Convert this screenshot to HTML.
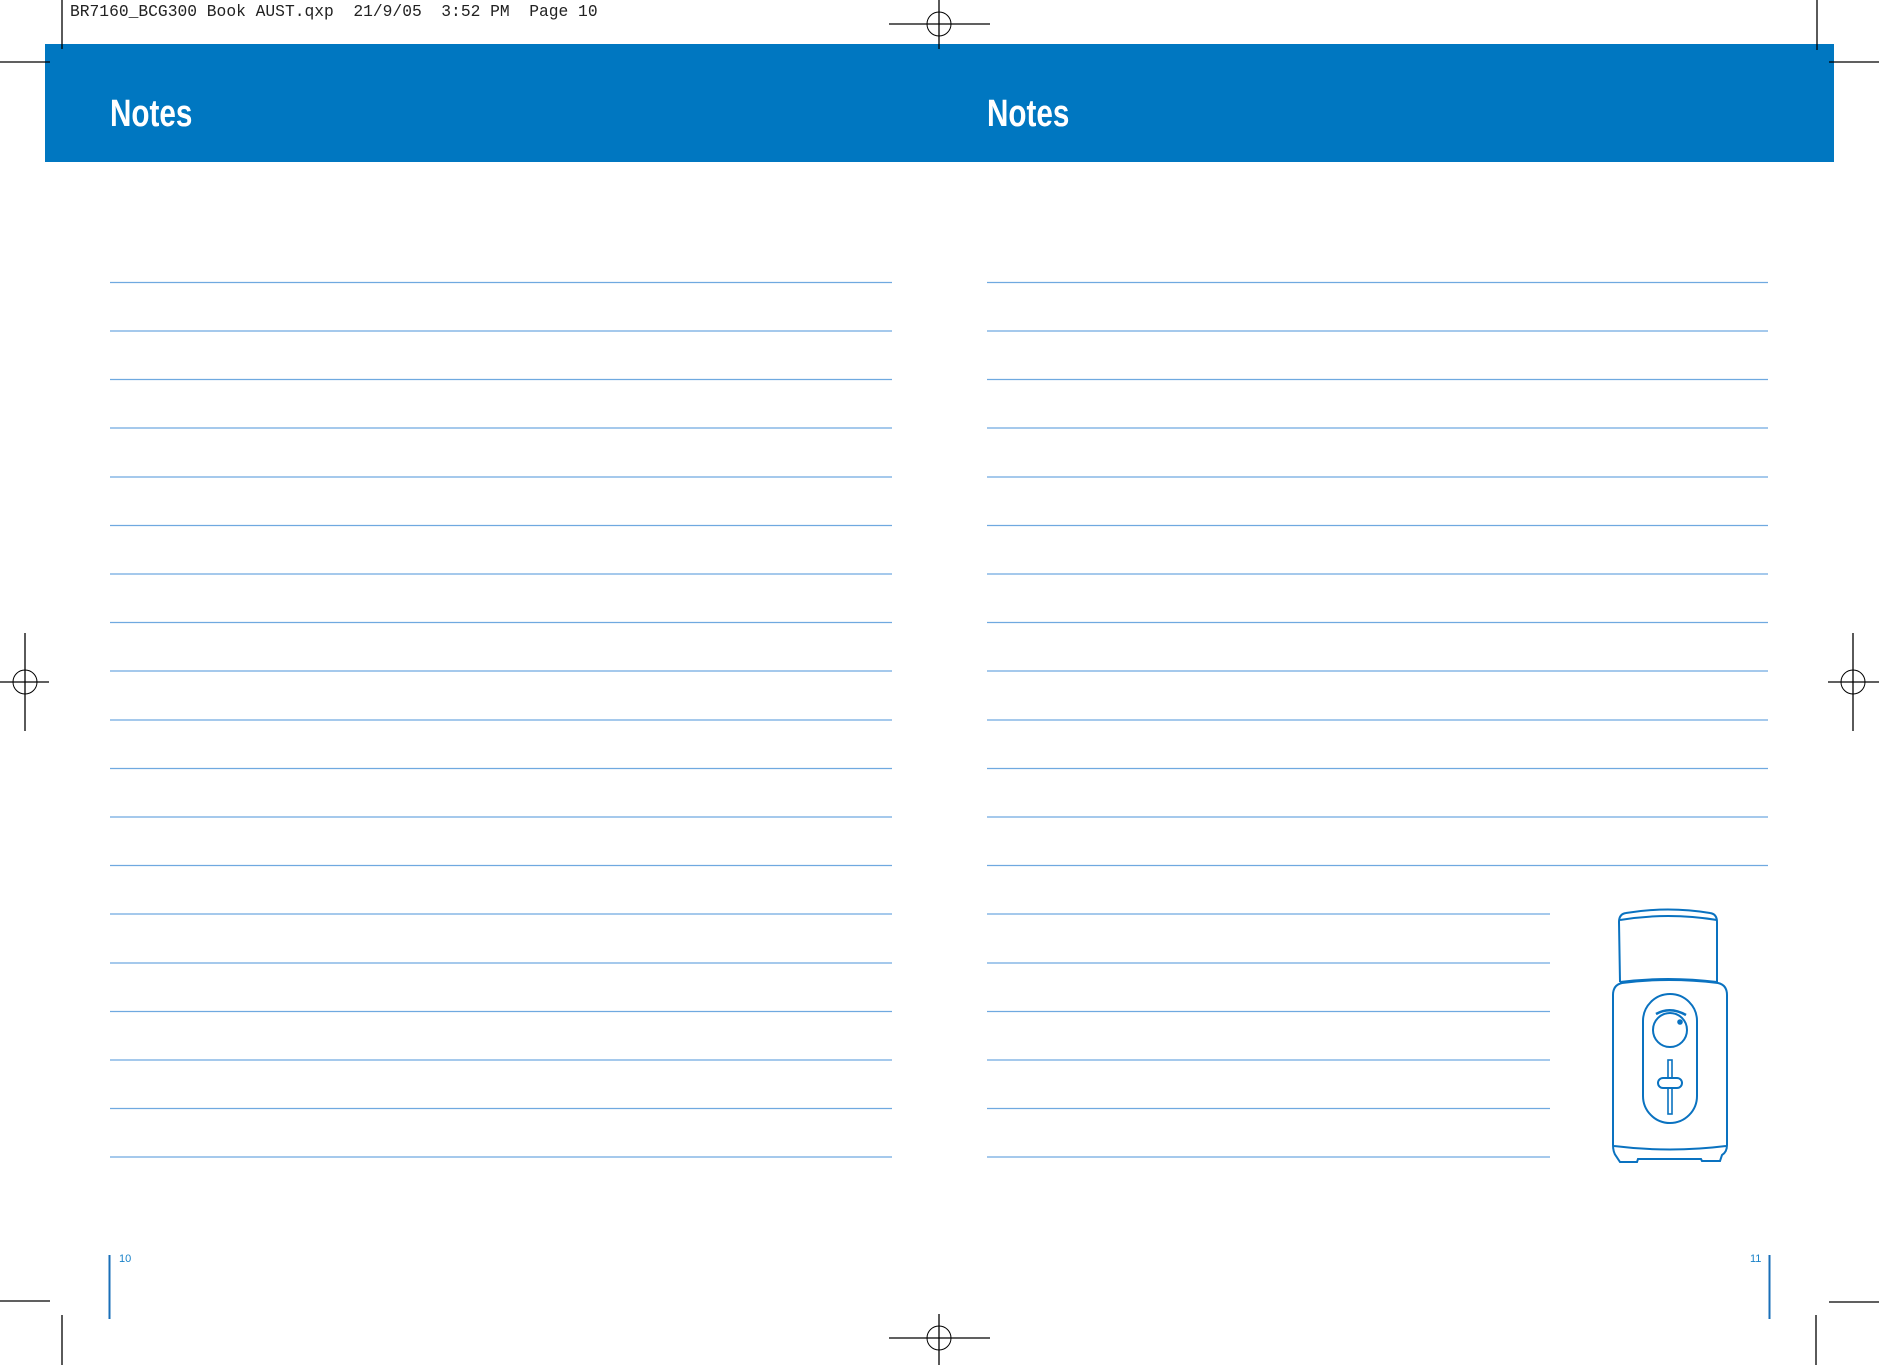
<!DOCTYPE html>
<html><head><meta charset="utf-8"><style>
body{margin:0;width:1879px;height:1365px;background:#fff;position:relative;overflow:hidden;font-family:"Liberation Sans",sans-serif}
.band{position:absolute;left:45px;top:44px;width:1789px;height:118px;background:#0077c1}
.t{position:absolute;top:92px;color:#fff;font-weight:bold;font-size:38px;transform:scaleX(0.78);transform-origin:left top;line-height:44px}
.hdr{position:absolute;left:70px;top:2px;font-family:"Liberation Mono",monospace;font-size:16.3px;color:#222;white-space:pre}
.pn{position:absolute;top:1253px;font-size:11px;color:#1a82c8}
svg{position:absolute;left:0;top:0}
</style></head><body>
<div class="band"></div>
<div class="t" style="left:110px">Notes</div>
<div class="t" style="left:987px">Notes</div>
<div class="hdr">BR7160_BCG300 Book AUST.qxp  21/9/05  3:52 PM  Page 10</div>
<div class="pn" style="left:119px">10</div>
<div class="pn" style="left:1750px">11</div>
<svg width="1879" height="1365" viewBox="0 0 1879 1365">
<g stroke="#6fa9e0" stroke-width="1.3" id="lines">
<line x1="110" x2="892" y1="282.5" y2="282.5"/><line x1="987" x2="1768" y1="282.5" y2="282.5"/>
<line x1="110" x2="892" y1="331" y2="331"/><line x1="987" x2="1768" y1="331" y2="331"/>
<line x1="110" x2="892" y1="379.5" y2="379.5"/><line x1="987" x2="1768" y1="379.5" y2="379.5"/>
<line x1="110" x2="892" y1="428" y2="428"/><line x1="987" x2="1768" y1="428" y2="428"/>
<line x1="110" x2="892" y1="477" y2="477"/><line x1="987" x2="1768" y1="477" y2="477"/>
<line x1="110" x2="892" y1="525.5" y2="525.5"/><line x1="987" x2="1768" y1="525.5" y2="525.5"/>
<line x1="110" x2="892" y1="574" y2="574"/><line x1="987" x2="1768" y1="574" y2="574"/>
<line x1="110" x2="892" y1="622.5" y2="622.5"/><line x1="987" x2="1768" y1="622.5" y2="622.5"/>
<line x1="110" x2="892" y1="671" y2="671"/><line x1="987" x2="1768" y1="671" y2="671"/>
<line x1="110" x2="892" y1="720" y2="720"/><line x1="987" x2="1768" y1="720" y2="720"/>
<line x1="110" x2="892" y1="768.5" y2="768.5"/><line x1="987" x2="1768" y1="768.5" y2="768.5"/>
<line x1="110" x2="892" y1="817" y2="817"/><line x1="987" x2="1768" y1="817" y2="817"/>
<line x1="110" x2="892" y1="865.5" y2="865.5"/><line x1="987" x2="1768" y1="865.5" y2="865.5"/>
<line x1="110" x2="892" y1="914" y2="914"/><line x1="987" x2="1550" y1="914" y2="914"/>
<line x1="110" x2="892" y1="963" y2="963"/><line x1="987" x2="1550" y1="963" y2="963"/>
<line x1="110" x2="892" y1="1011.5" y2="1011.5"/><line x1="987" x2="1550" y1="1011.5" y2="1011.5"/>
<line x1="110" x2="892" y1="1060" y2="1060"/><line x1="987" x2="1550" y1="1060" y2="1060"/>
<line x1="110" x2="892" y1="1108.5" y2="1108.5"/><line x1="987" x2="1550" y1="1108.5" y2="1108.5"/>
<line x1="110" x2="892" y1="1157" y2="1157"/><line x1="987" x2="1550" y1="1157" y2="1157"/>
</g>
<g stroke="#1a6fb8" stroke-width="2"><line x1="109.5" x2="109.5" y1="1255" y2="1319"/><line x1="1769.5" x2="1769.5" y1="1255" y2="1319"/></g>
<g stroke="#000" stroke-width="1.3" fill="none">
<line x1="62" x2="62" y1="0" y2="49"/><line x1="0" x2="50" y1="62" y2="62"/>
<line x1="1817" x2="1817" y1="0" y2="50"/><line x1="1829" x2="1879" y1="62" y2="62"/>
<line x1="62" x2="62" y1="1315" y2="1365"/><line x1="0" x2="50" y1="1301" y2="1301"/>
<line x1="1816" x2="1816" y1="1315" y2="1365"/><line x1="1829" x2="1879" y1="1302" y2="1302"/>
<circle cx="939" cy="24" r="12" stroke-width="1"/><line x1="889" x2="990" y1="24" y2="24"/><line x1="939" x2="939" y1="0" y2="49"/>
<circle cx="939" cy="1338" r="12" stroke-width="1"/><line x1="889" x2="990" y1="1338" y2="1338"/><line x1="939" x2="939" y1="1314" y2="1365"/>
<circle cx="25" cy="682" r="12" stroke-width="1"/><line x1="0" x2="49" y1="682" y2="682"/><line x1="25" x2="25" y1="633" y2="731"/>
<circle cx="1853" cy="682" r="12" stroke-width="1"/><line x1="1828" x2="1879" y1="682" y2="682"/><line x1="1853" x2="1853" y1="633" y2="731"/>
</g>
<g stroke="#0a72c0" stroke-width="2" fill="none">
<path d="M1620 982 L1619 922 Q1619 914 1626 913 Q1668 906 1710 913 Q1717 914 1717 922 L1717 982"/>
<path d="M1620 920 Q1668 912 1717 920"/>
<path d="M1620 982 Q1668 976 1717 982"/>
<path d="M1622 983 Q1668 977 1718 983 Q1727 985 1727 995 L1727 1145 Q1727 1152 1722 1155 L1720 1161 L1702 1161 L1701 1159 L1638 1159 L1637 1162 L1620 1162 L1616 1156 Q1613 1152 1613 1145 L1613 995 Q1613 985 1622 983 Z"/>
<path d="M1614 1146 Q1670 1153 1726 1146"/>
<rect x="1643" y="994" width="54" height="129" rx="27"/>
<circle cx="1670" cy="1030" r="17"/>
<path d="M1656 1014 Q1670 1006 1686 1015" stroke-width="2.5"/>
<circle cx="1680" cy="1022" r="1.8" fill="#0a72c0"/>
<rect x="1668" y="1060" width="4" height="54" stroke-width="1.6"/>
<rect x="1658" y="1078" width="24" height="10" rx="5" fill="#fff"/>
</g>
</svg>
</body></html>
